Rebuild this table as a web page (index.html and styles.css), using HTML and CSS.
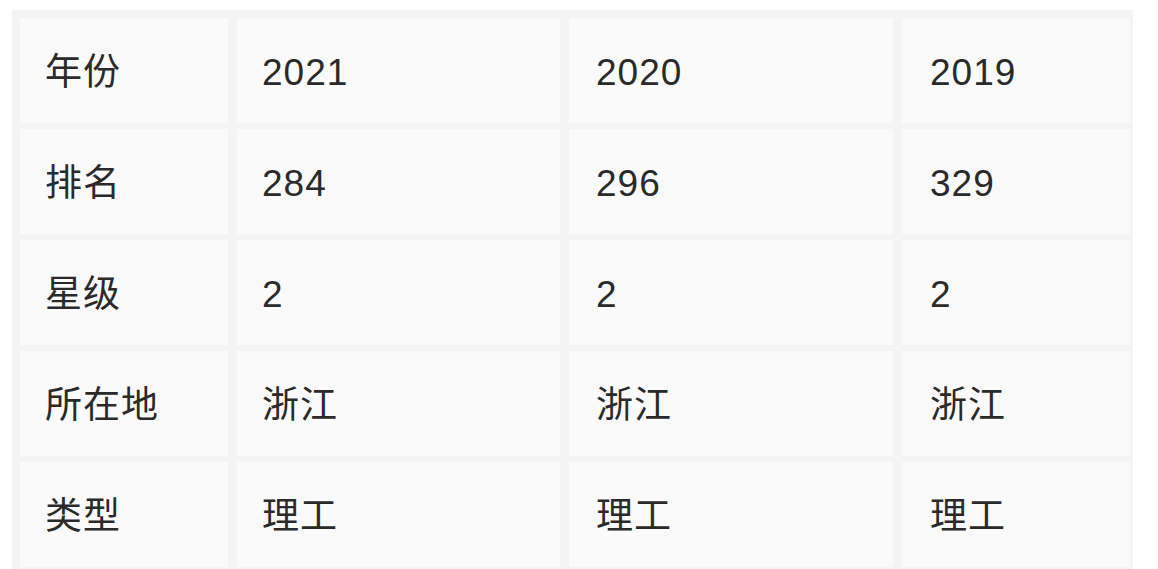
FILE: index.html
```html
<!DOCTYPE html>
<html lang="zh">
<head>
<meta charset="utf-8">
<link rel="stylesheet" href="styles.css">
</head>
<body>
<div class="table">
  <div class="cell">年份</div><div class="cell">2021</div><div class="cell">2020</div><div class="cell">2019</div>
  <div class="cell">排名</div><div class="cell">284</div><div class="cell">296</div><div class="cell">329</div>
  <div class="cell">星级</div><div class="cell">2</div><div class="cell">2</div><div class="cell">2</div>
  <div class="cell">所在地</div><div class="cell">浙江</div><div class="cell">浙江</div><div class="cell">浙江</div>
  <div class="cell">类型</div><div class="cell">理工</div><div class="cell">理工</div><div class="cell">理工</div>
</div>
</body>
</html>
```

FILE: styles.css
```css
html, body {
  margin: 0;
  padding: 0;
  background: #ffffff;
  overflow: hidden;
}
body {
  padding: 10px 0 0 12px;
  font-family: "Liberation Sans", "Noto Sans CJK SC", sans-serif;
  color: #2a2a2a;
}
.table {
  width: 1121px;
  box-sizing: border-box;
  background: #f4f4f4;
  padding: 8px 3px 8px 8px;
  display: grid;
  grid-template-columns: 208px 323px 324px 228px;
  grid-auto-rows: 105px;
  column-gap: 9px;
  row-gap: 6px;
}
.cell {
  box-sizing: border-box;
  background: #fafafa;
  display: flex;
  align-items: center;
  padding-left: 25px;
  padding-top: 4px;
  font-size: 37px;
  line-height: 1;
  letter-spacing: 1px;
}
.cell:nth-child(4n+3) { padding-left: 27px; }
.cell:nth-child(4n) { padding-left: 28px; }
```
